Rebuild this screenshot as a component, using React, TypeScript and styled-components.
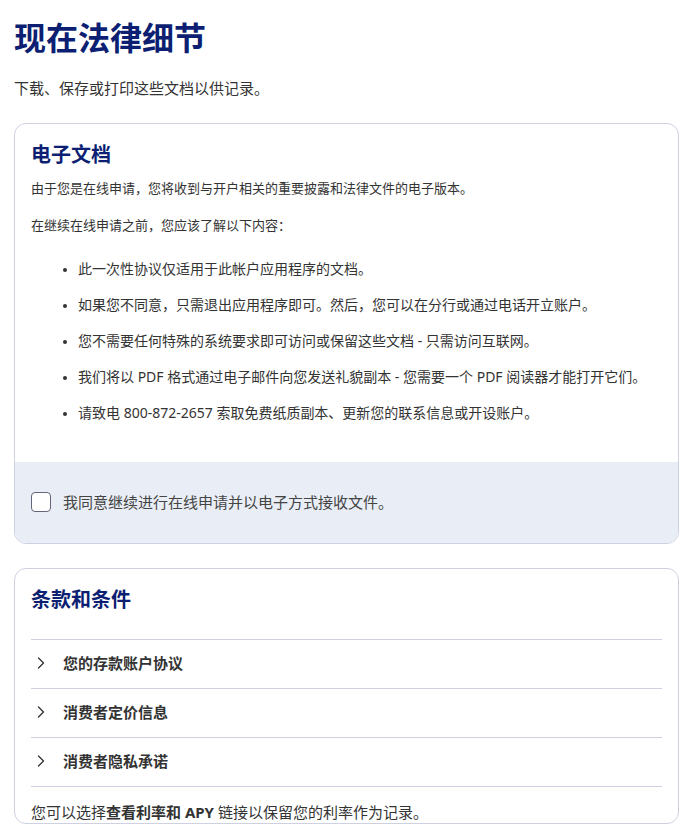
import styled, { createGlobalStyle } from 'styled-components'

const GlobalStyle = createGlobalStyle`
  body {
    margin: 0;
    background: #ffffff;
    font-family: "Noto Sans", "Noto Sans CJK SC", sans-serif;
    color: #333333;
  }
`

const Page = styled.main`
  padding: 19px 16px 0 14px;
`

const Title = styled.h1`
  margin: 0;
  font-size: 32px;
  line-height: 38px;
  font-weight: 700;
  color: #0c1f72;
`

const Lead = styled.p`
  margin: 19px 0 0 0;
  font-size: 15px;
  line-height: 24px;
`

const Card = styled.section<{ $top: number }>`
  margin-top: ${p => p.$top}px;
  border: 1px solid #cdd1e2;
  border-radius: 12px;
  overflow: hidden;
  background: #ffffff;
`

const CardBody = styled.div`
  padding: 16px 16px 0 16px;
`

const Heading = styled.h2`
  margin: 0;
  font-size: 20px;
  line-height: 30px;
  font-weight: 700;
  color: #0c1f72;
`

const Text = styled.p<{ $top: number }>`
  margin: ${p => p.$top}px 0 0 0;
  font-size: 13px;
  line-height: 22px;
`

const List = styled.ul`
  margin: 22px 0 0 0;
  padding: 0 0 24px 47px;
  list-style: disc;
`

const Item = styled.li`
  font-size: 14px;
  line-height: 22px;
  margin-bottom: 14px;

  &::marker {
    font-size: 12px;
  }
`

const Consent = styled.label`
  display: flex;
  align-items: center;
  gap: 12px;
  background: #e9eef6;
  padding: 29px 16px 30px 16px;
  font-size: 15px;
  line-height: 22px;
  color: #444444;
  cursor: pointer;
`

const Box = styled.span`
  width: 18px;
  height: 18px;
  border: 1.5px solid #64677a;
  border-radius: 4px;
  background: #ffffff;
  flex-shrink: 0;
`

const Accordion = styled.div`
  margin-top: 24px;
  border-top: 1px solid #cdd1e2;
`

const Row = styled.button`
  display: flex;
  align-items: center;
  gap: 15px;
  width: 100%;
  height: 49px;
  padding: 0 0 3px 3px;
  border: 0;
  border-bottom: 1px solid #cdd1e2;
  background: transparent;
  font-family: inherit;
  font-size: 15px;
  font-weight: 700;
  color: #333333;
  text-align: left;
  cursor: pointer;
`

const Note = styled.p`
  margin: 14px 0 0 0;
  font-size: 15px;
  line-height: 22px;

  strong {
    font-weight: 700;
  }
`

function Chevron () {
  return (
    <svg width='14' height='14' viewBox='0 0 14 14' fill='none'>
      <path d='M4.5 2L9.5 7l-5 5' stroke='#333' strokeWidth='1.3' strokeLinecap='round' strokeLinejoin='round' />
    </svg>
  )
}

const bullets = [
  '此一次性协议仅适用于此帐户应用程序的文档。',
  '如果您不同意，只需退出应用程序即可。然后，您可以在分行或通过电话开立账户。',
  '您不需要任何特殊的系统要求即可访问或保留这些文档 - 只需访问互联网。',
  '我们将以 PDF 格式通过电子邮件向您发送礼貌副本 - 您需要一个 PDF 阅读器才能打开它们。',
  '请致电 800-872-2657 索取免费纸质副本、更新您的联系信息或开设账户。'
]

const terms = ['您的存款账户协议', '消费者定价信息', '消费者隐私承诺']

export default function App () {
  return (
    <>
      <GlobalStyle />
      <Page>
        <Title>现在法律细节</Title>
        <Lead>下载、保存或打印这些文档以供记录。</Lead>

        <Card $top={23}>
          <CardBody>
            <Heading>电子文档</Heading>
            <Text $top={7}>由于您是在线申请，您将收到与开户相关的重要披露和法律文件的电子版本。</Text>
            <Text $top={15}>在继续在线申请之前，您应该了解以下内容：</Text>
            <List>
              {bullets.map(b => <Item key={b}>{b}</Item>)}
            </List>
          </CardBody>
          <Consent>
            <Box />
            我同意继续进行在线申请并以电子方式接收文件。
          </Consent>
        </Card>

        <Card $top={24}>
          <CardBody>
            <Heading>条款和条件</Heading>
            <Accordion>
              {terms.map(t => (
                <Row key={t}>
                  <Chevron />
                  {t}
                </Row>
              ))}
            </Accordion>
            <Note>您可以选择<strong>查看利率和 APY</strong> 链接以保留您的利率作为记录。</Note>
          </CardBody>
        </Card>
      </Page>
    </>
  )
}
